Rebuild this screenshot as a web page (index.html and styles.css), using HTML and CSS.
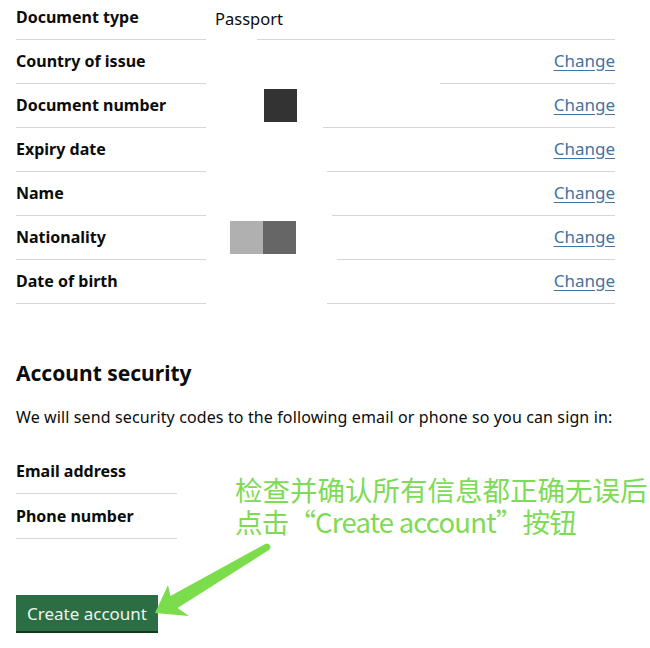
FILE: index.html
```html
<!DOCTYPE html>
<html lang="en">
<head>
    <meta charset="UTF-8">
    <meta name="viewport" content="width=device-width, initial-scale=1.0">
    <title>Check your answers</title>
    <link rel="stylesheet" href="styles.css">
</head>
<body>
    <main class="pagina">
        <div class="resumo">
            <div class="linha">
                <div class="chave">Document type</div>
                <div class="valor">Passport</div>
                <div class="acao"></div>
                <span class="risco risco-longo"></span>
            </div>
            <div class="linha">
                <div class="chave">Country of issue</div>
                <div class="valor"></div>
                <div class="acao"><a href="#">Change</a></div>
                <span class="risco risco-curto"></span>
            </div>
            <div class="linha">
                <div class="chave">Document number</div>
                <div class="valor"><span class="pixel pixel-escuro pixel-afastado"></span></div>
                <div class="acao"><a href="#">Change</a></div>
                <span class="risco risco-3"></span>
            </div>
            <div class="linha">
                <div class="chave">Expiry date</div>
                <div class="valor"></div>
                <div class="acao"><a href="#">Change</a></div>
                <span class="risco"></span>
            </div>
            <div class="linha">
                <div class="chave">Name</div>
                <div class="valor"></div>
                <div class="acao"><a href="#">Change</a></div>
                <span class="risco risco-5"></span>
            </div>
            <div class="linha">
                <div class="chave">Nationality</div>
                <div class="valor"><span class="pixel pixel-claro"></span><span class="pixel pixel-medio"></span></div>
                <div class="acao"><a href="#">Change</a></div>
                <span class="risco risco-6"></span>
            </div>
            <div class="linha">
                <div class="chave">Date of birth</div>
                <div class="valor"></div>
                <div class="acao"><a href="#">Change</a></div>
                <span class="risco"></span>
            </div>
        </div>

        <h2 class="titulo">Account security</h2>
        <p class="texto">We will send security codes to the following email or phone so you can sign in:</p>

        <div class="contatos">
            <div class="contato">Email address</div>
            <div class="contato">Phone number</div>
        </div>

        <button class="botao">Create account</button>

        <!-- anotação por cima da tela -->
        <p class="nota">检查并确认所有信息都正确无误后<br><span class="nota-l2">点击“Create account”按钮</span></p>
        <svg class="seta" width="650" height="648" viewBox="0 0 650 648">
            <path d="M265.2 544 L170.4 596 L168 585 L155 613 L189 616 L177.6 608 L268.8 550 A3.5 3.5 0 0 0 265.2 544 Z" fill="#7cdd4c"/>
        </svg>
    </main>
</body>
</html>
```

FILE: styles.css
```css
* {
    box-sizing: border-box;
}
body, html {
    margin: 0;
    padding: 0;
    background-color: white;
}
.pagina {
    position: relative;
    width: 650px;
    height: 648px;
    overflow: hidden;
    padding: 0 35px 0 16px;
    color: #0b0c0c;
    font-family: "Noto Sans", Arial, sans-serif;
    font-size: 16px;
    line-height: 25px;
}
.resumo {
    margin-top: -4px;
}
.linha {
    display: grid;
    grid-template-columns: 190px 1fr auto;
    column-gap: 9px;
    height: 44px;
}
.chave {
    grid-column: 1;
    grid-row: 1;
    display: flex;
    align-items: center;
    font-weight: 700;
    border-bottom: 1px solid #d4d6d7;
}
.valor {
    grid-column: 2;
    grid-row: 1;
    display: flex;
    align-items: center;
    font-size: 16.5px;
}
.acao {
    grid-column: 3;
    grid-row: 1;
    display: flex;
    align-items: center;
    padding-bottom: 4px;
    font-size: 17px;
}
.acao a {
    color: #44739f;
    text-decoration: underline;
    text-underline-offset: 3px;
}
/* a linha de baixo, cortada pela parte borrada */
.risco {
    grid-column: 2 / 4;
    grid-row: 1;
    align-self: end;
    border-bottom: 1px solid #d4d6d7;
    margin-left: 112px;
}
.risco-longo { margin-left: 42px; }
.risco-curto { margin-left: 225px; }
.risco-3 { margin-left: 108px; }
.risco-5 { margin-left: 117px; }
.risco-6 { margin-left: 122px; }
.pixel {
    width: 33px;
    height: 33px;
    margin-bottom: 1px;
}
.pixel-afastado { margin-left: 49px; }
.pixel-escuro { background-color: #333333; }
.pixel-claro { background-color: #b0b0b0; margin-left: 15px; }
.pixel-medio { background-color: #666666; }
.titulo {
    margin: 54px 0 0;
    font-size: 21px;
    line-height: 30px;
    font-weight: 700;
}
.texto {
    margin: 17px 0 0;
    letter-spacing: 0.12px;
}
.contatos {
    margin-top: 19px;
}
.contato {
    width: 161px;
    height: 45px;
    display: flex;
    align-items: center;
    font-weight: 700;
    border-bottom: 1px solid #d4d6d7;
}
.botao {
    display: block;
    margin-top: 56px;
    height: 36px;
    padding: 0 11px;
    border: none;
    border-radius: 0;
    background-color: #2c6e44;
    box-shadow: 0 2px 0 #13391f;
    color: #eef4ef;
    font-family: "Noto Sans", Arial, sans-serif;
    font-size: 17px;
    line-height: 25px;
}
.nota {
    position: absolute;
    left: 235px;
    top: 473px;
    margin: 0;
    color: #7ddb55;
    font-family: "Noto Sans CJK SC", "Noto Sans", sans-serif;
    font-size: 27.5px;
    line-height: 32px;
    white-space: nowrap;
}
.nota-l2 {
    letter-spacing: -0.8px;
}
.seta {
    position: absolute;
    top: 0;
    left: 0;
    pointer-events: none;
}
```
